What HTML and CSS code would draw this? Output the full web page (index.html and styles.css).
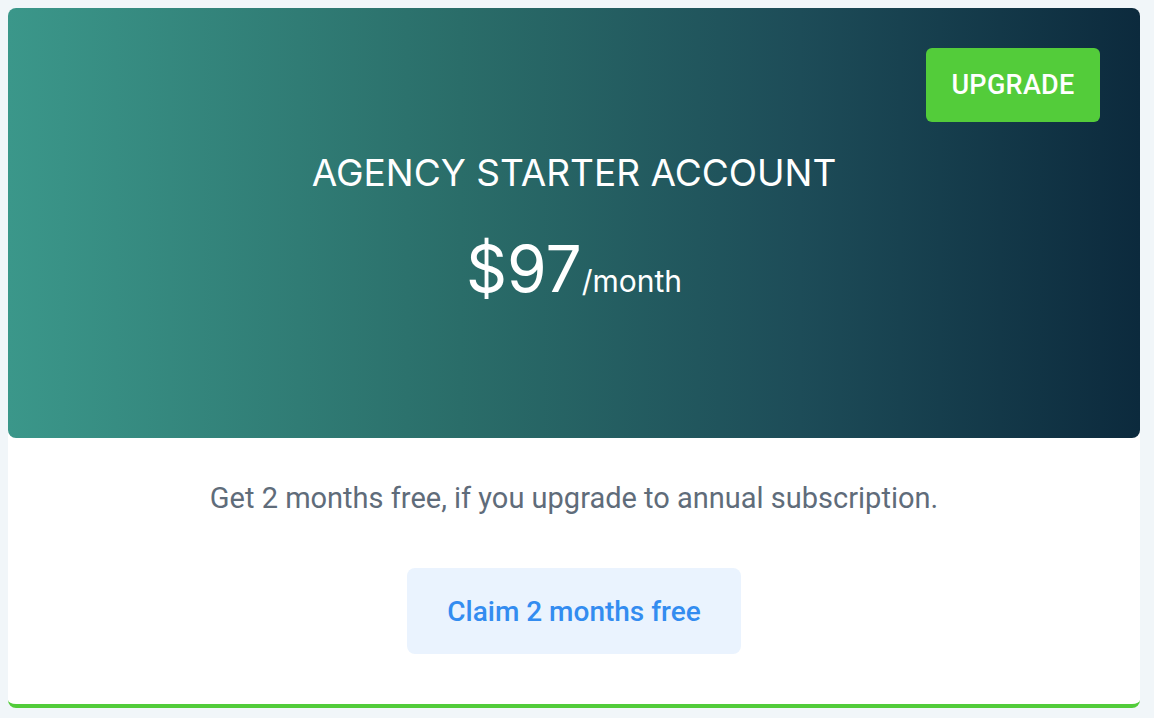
FILE: index.html
```html
<!DOCTYPE html>
<html>
<head>
<meta charset="utf-8">
<link rel="stylesheet" href="styles.css">
</head>
<body>
<div class="card">
  <div class="hero">
    <button class="upgrade">UPGRADE</button>
    <h1 class="title">AGENCY STARTER ACCOUNT</h1>
    <div class="price"><span class="amount">$97</span><span class="per">/month</span></div>
  </div>
  <div class="body">
    <p class="note">Get 2 months free, if you upgrade to annual subscription.</p>
    <button class="claim">Claim 2 months free</button>
  </div>
</div>
</body>
</html>
```
FILE: styles.css
```css
html, body { margin: 0; padding: 0; }
body {
  background: #f1f6f9;
  padding: 8px;
  font-family: Inter, "Noto Sans", sans-serif;
}
.card {
  width: 1132px;
  background: #fff;
  border-radius: 8px;
  border-bottom: 4px solid #52cc3a;
  box-sizing: border-box;
  height: 700px;
  display: flex;
  flex-direction: column;
}
.hero {
  position: relative;
  height: 430px;
  border-radius: 8px;
  background: linear-gradient(to right, #3b978a 0%, #2a6d69 40%, #1d4c58 70%, #0c2a3d 100%);
  color: #fff;
  display: flex;
  flex-direction: column;
  align-items: center;
  padding-top: 143px;
  box-sizing: border-box;
}
.upgrade {
  position: absolute;
  top: 40px;
  right: 40px;
  width: 174px;
  height: 74px;
  background: #53cc3a;
  color: #fff;
  border: none;
  border-radius: 6px;
  font-family: Roboto, sans-serif;
  font-size: 27px;
  font-weight: 500;
  letter-spacing: 0.3px;
}
.title {
  margin: 0;
  font-size: 37px;
  font-weight: 400;
  line-height: 44px;
}
.price {
  margin-top: 38px;
  display: flex;
  align-items: baseline;
  line-height: 72px;
}
.amount { font-size: 64px; }
.per { font-size: 30px; }
.body {
  display: flex;
  flex-direction: column;
  align-items: center;
  flex: 1;
}
.note {
  margin: 44px 0 0;
  font-family: Roboto, sans-serif;
  font-size: 29px;
  line-height: 32px;
  color: #5f6c7a;
}
.claim {
  margin-top: 54px;
  width: 334px;
  height: 86px;
  background: #eaf3fe;
  color: #338cf0;
  border: none;
  border-radius: 8px;
  font-family: Roboto, sans-serif;
  font-size: 28px;
  font-weight: 500;
}
```
